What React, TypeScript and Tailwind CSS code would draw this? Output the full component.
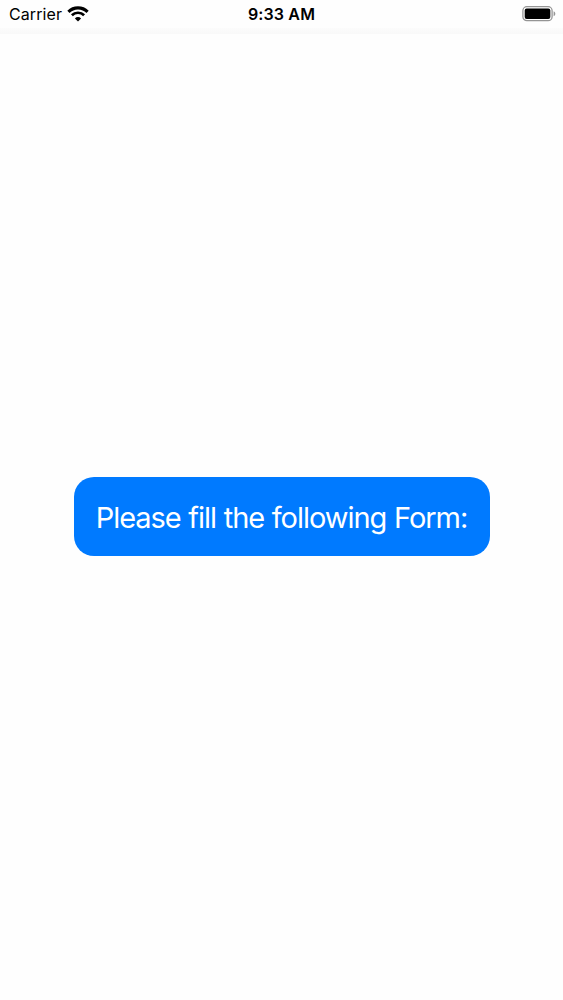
const WifiIcon = () => (
  <svg viewBox="0 0 22 16" className="w-[22px] h-4" fill="none">
    <path d="M1.4 5.8a13.6 13.6 0 0 1 19.2 0" stroke="black" strokeWidth="3.1" />
    <path d="M4.9 9.3a8.6 8.6 0 0 1 12.2 0" stroke="black" strokeWidth="2.7" />
    <path d="M11 15.5 7.9 12.4a4.4 4.4 0 0 1 6.2 0Z" fill="black" />
  </svg>
);

const BatteryIcon = () => (
  <svg viewBox="0 0 34 16" className="w-[34px] h-4" fill="none">
    <rect x="0.9" y="0.7" width="29.2" height="14" rx="4" stroke="#959595" strokeWidth="1.3" />
    <rect x="2.7" y="2.5" width="25.6" height="10.4" rx="2" fill="black" />
    <path d="M31.6 5.3c2.3.8 2.3 4.2 0 5Z" fill="#959595" />
  </svg>
);

const StatusBar = () => {
  return (
    <div className="grid grid-cols-3 items-center h-7 text-black text-[16px] leading-7">
      <div className="flex items-center gap-[5px] pl-[9px]">
        <span className="tracking-[0.1px]">Carrier</span>
        <WifiIcon />
      </div>
      <span className="text-center font-semibold tracking-[0.15px]">9:33 AM</span>
      <div className="flex justify-end pr-[7px]">
        <BatteryIcon />
      </div>
    </div>
  );
};

const App = () => {
  return (
    <div className="flex flex-col h-screen bg-[#fefefe] font-['Inter',sans-serif]">
      <StatusBar />
      <div className="h-[6px] bg-linear-to-b from-[#fcfcfc] to-[#f9f9f9]" />
      <div className="flex flex-1 items-center justify-center pb-px">
        <button className="w-[416px] h-[79px] pt-[2px] rounded-[20px] bg-[#007aff] text-white text-[29px] tracking-[-1.03px] [word-spacing:0.5px] whitespace-nowrap">
          Please fill the following Form:
        </button>
      </div>
    </div>
  );
};

export default App;
